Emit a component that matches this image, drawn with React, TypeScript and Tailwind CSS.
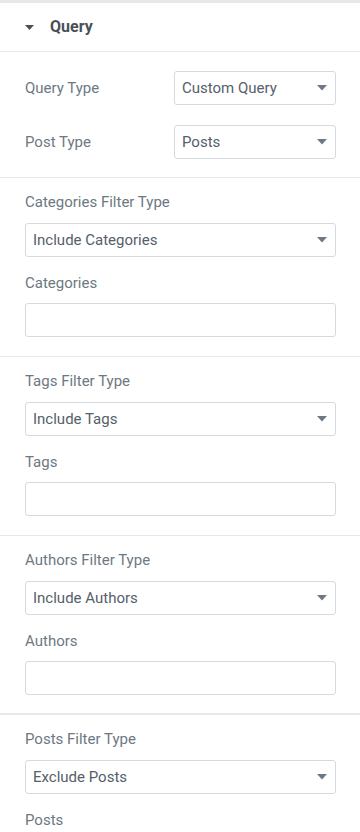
import React from "react";

const Caret = () => (
  <svg width="10" height="6" viewBox="0 0 10 6" className="shrink-0">
    <path d="M0 0 L10 0 L5 5.5 Z" fill="#6d7882" />
  </svg>
);

const Select = ({ value, className = "" }: { value: string; className?: string }) => (
  <div
    className={`h-[34px] border border-[#d5dadf] rounded-[3px] bg-white flex items-center justify-between pl-[7px] pr-[8px] ${className}`}
  >
    <span className="text-[15px] text-[#55606a]">{value}</span>
    <Caret />
  </div>
);

const Input = () => <div className="h-[34px] border border-[#d5dadf] rounded-[3px] bg-white" />;

const Label = ({ children }: { children: React.ReactNode }) => (
  <div className="h-[20px] leading-[20px] text-[15px] text-[#6d7882]">{children}</div>
);

const FilterSection = ({
  filterLabel,
  filterValue,
  label,
  last = false,
  thick = false,
  pb = "pb-[19px]",
}: {
  filterLabel: string;
  filterValue: string;
  label: string;
  last?: boolean;
  thick?: boolean;
  pb?: string;
}) => (
  <div className={`pl-[25px] pr-[24px] pt-[14px] ${last ? "" : pb} ${thick ? "border-b-2" : "border-b"} border-[#e6e8ea] ${last ? "border-b-0" : ""}`}>
    <Label>{filterLabel}</Label>
    <Select value={filterValue} className="mt-[11px]" />
    <div className="mt-[16px]">
      <Label>{label}</Label>
    </div>
    {!last && (
      <div className="mt-[10px]">
        <Input />
      </div>
    )}
  </div>
);

export default function App() {
  return (
    <div className="w-[360px] min-h-[832px] bg-white overflow-hidden" style={{ fontFamily: "Roboto, 'Liberation Sans', sans-serif" }}>
      <div className="h-[3px] bg-[#e6e8ea]" />
      <div className="h-[49px] flex items-center border-b border-[#e6e8ea] px-[25px]">
        <svg width="9" height="5" viewBox="0 0 9 5" className="mr-[16px]">
          <path d="M0 0 L9 0 L4.5 5 Z" fill="#495157" />
        </svg>
        <span className="text-[16px] font-bold text-[#495157]">Query</span>
      </div>
      <div className="pl-[25px] pr-[24px] pt-[19px] pb-[18px] border-b border-[#e6e8ea] flex flex-col gap-[20px]">
        <div className="flex items-center justify-between">
          <span className="text-[15px] text-[#6d7882]">Query Type</span>
          <Select value="Custom Query" className="w-[162px]" />
        </div>
        <div className="flex items-center justify-between">
          <span className="text-[15px] text-[#6d7882]">Post Type</span>
          <Select value="Posts" className="w-[162px]" />
        </div>
      </div>
      <FilterSection filterLabel="Categories Filter Type" filterValue="Include Categories" label="Categories" />
      <FilterSection filterLabel="Tags Filter Type" filterValue="Include Tags" label="Tags" />
      <FilterSection filterLabel="Authors Filter Type" filterValue="Include Authors" label="Authors" thick pb="pb-[18px]" />
      <FilterSection filterLabel="Posts Filter Type" filterValue="Exclude Posts" label="Posts" last />
    </div>
  );
}
